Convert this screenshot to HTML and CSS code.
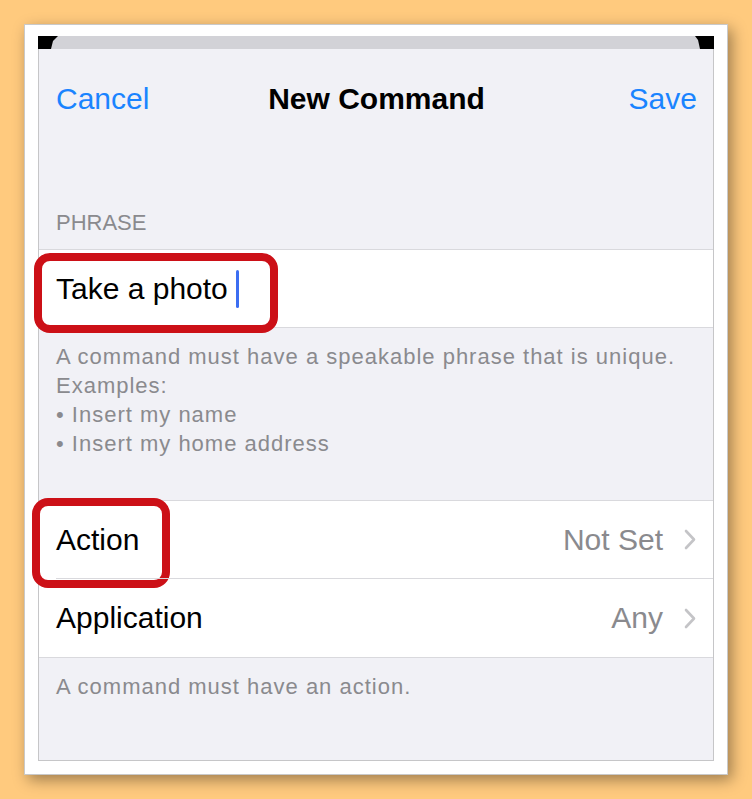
FILE: index.html
```html
<!DOCTYPE html>
<html>
<head>
    <title>New Command</title>
    <link rel="stylesheet" href="styles.css">
</head>
<body>
    <div class="card">
        <div class="screen">
            <div class="status"><div class="status-fill"></div></div>
            <div class="nav">
                <span class="nav-btn">Cancel</span>
                <span class="nav-title">New Command</span>
                <span class="nav-btn nav-save">Save</span>
            </div>

            <div class="section-head">PHRASE</div>
            <div class="group">
                <div class="row">
                    <span class="phrase">Take a photo</span><span class="caret"></span>
                    <div class="mark mark-phrase"></div>
                </div>
            </div>
            <div class="section-foot">
                A command must have a speakable phrase that is unique.<br>
                Examples:<br>
                &bull; Insert my name<br>
                &bull; Insert my home address
            </div>

            <div class="group group-actions">
                <div class="row row-link">
                    <span class="label">Action</span>
                    <span class="value">Not Set</span>
                    <svg class="chevron" width="12" height="21" viewBox="0 0 12 21"><path d="M2 2 L10 10.5 L2 19" fill="none" stroke="#c4c4c7" stroke-width="2.6" stroke-linecap="round" stroke-linejoin="round"/></svg>
                    <div class="mark mark-action"></div>
                </div>
                <div class="row row-link">
                    <span class="label">Application</span>
                    <span class="value">Any</span>
                    <svg class="chevron" width="12" height="21" viewBox="0 0 12 21"><path d="M2 2 L10 10.5 L2 19" fill="none" stroke="#c4c4c7" stroke-width="2.6" stroke-linecap="round" stroke-linejoin="round"/></svg>
                </div>
            </div>
            <div class="section-foot">A command must have an action.</div>
        </div>
    </div>
</body>
</html>
```

FILE: styles.css
```css
* { margin: 0; padding: 0; box-sizing: border-box; font-family: "Liberation Sans", Arial, sans-serif; }
body { background: #ffca7e; height: 799px; overflow: hidden; }

.card { margin: 24px 0 0 24px; width: 704px; height: 751px; background: #fff; border: 1px solid #c9c9c9; padding: 11px 13px 13px 13px; box-shadow: 4px 5px 14px rgba(0,0,0,0.38); }
.screen { height: 100%; background: #f1f1f6; border: 1px solid #c6c6c8; border-top: none; }

/* device corners peek out black above the status strip */
.status { height: 13px; background: #000; margin: 0 -1px; }
.status-fill { height: 100%; background: #d2d2d7; clip-path: polygon(20px 0, calc(100% - 19px) 0, calc(100% - 16px) 4px, calc(100% - 14px) 100%, 13px 100%, 15px 5px); }

.nav { display: grid; grid-template-columns: 1fr auto 1fr; align-items: center; padding: 33px 16px 0 17px; font-size: 30px; }
.nav-btn { color: #1a84ff; }
.nav-save { text-align: right; }
.nav-title { font-weight: bold; color: #000; }

.section-head { margin: 94px 0 13px 17px; font-size: 22px; color: #8a8a8e; }
.section-foot { padding: 14px 20px 0 17px; font-size: 22px; line-height: 29px; letter-spacing: 1px; color: #8a8a8e; }

.group { background: #fff; border-top: 1px solid #d9d9dd; border-bottom: 1px solid #d9d9dd; }
.group-actions { margin-top: 42px; }
.row { position: relative; height: 77px; display: flex; align-items: center; padding: 0 17px; font-size: 30px; color: #000; }
.row-link + .row-link { height: 79px; border-top: 1px solid #d9d9dd; margin-left: 17px; padding-left: 0; }

.caret { display: inline-block; width: 3px; height: 38px; margin-left: 8px; border-radius: 2px; background: #3c6ef2; }
.label { flex: 1; }
.value { color: #8a8a8e; }
.chevron { margin-left: 21px; }

.mark { position: absolute; border: 8px solid #cc1017; border-radius: 16px; }
.mark-phrase { left: -5px; top: 3px; width: 244px; height: 80px; }
.mark-action { left: -7px; top: -3px; width: 138px; height: 90px; }
```
